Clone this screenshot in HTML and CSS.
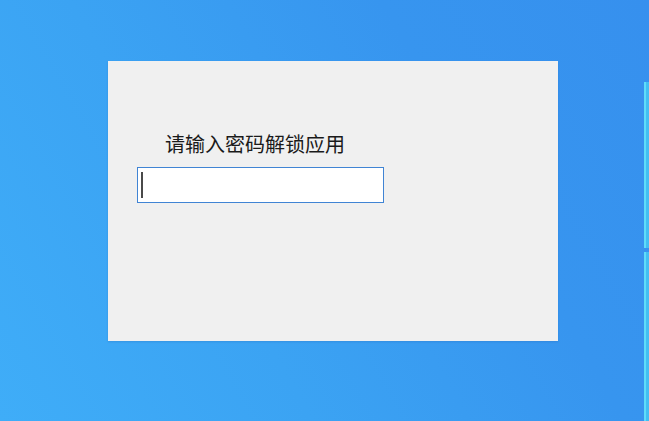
FILE: index.html
```html
<!DOCTYPE html>
<html lang="zh">
<head>
<meta charset="utf-8">
<title>解锁应用</title>
<link rel="stylesheet" href="styles.css">
</head>
<body>
<div class="desktop">
  <div class="edge edge-top"></div>
  <div class="edge edge-bottom"></div>
  <div class="dialog">
    <div class="label">请输入密码解锁应用</div>
    <div class="field"><span class="caret"></span></div>
  </div>
</div>
</body>
</html>
```

FILE: styles.css
```css
html, body {
  margin: 0;
  padding: 0;
}
body {
  width: 649px;
  height: 421px;
  overflow: hidden;
  font-family: "Noto Sans CJK SC", "Noto Sans", sans-serif;
}
.desktop {
  position: relative;
  width: 649px;
  height: 421px;
  background:
    linear-gradient(60deg, #3fadf8 0%, #3ba3f3 35%, #3795ef 70%, #3690ee 100%);
  padding: 61px 0 0 108px;
  box-sizing: border-box;
}
.edge {
  position: absolute;
  left: 644px;
  width: 5px;
  background: linear-gradient(90deg, #5fdcfa 0 2px, #42bff2 2px 100%);
}
.edge-top {
  top: 82px;
  height: 166px;
}
.edge-bottom {
  top: 252px;
  bottom: 0;
}
.dialog {
  width: 450px;
  height: 280px;
  background: #f0f0f0;
  box-sizing: border-box;
  padding: 68px 0 0 29px;
  box-shadow: 0 1px 2px rgba(30, 90, 170, 0.25);
}
.label {
  margin-left: 28px;
  font-size: 20px;
  line-height: 30px;
  color: #1a1a1a;
  letter-spacing: 0;
  height: 38px;
}
.field {
  width: 247px;
  height: 36px;
  box-sizing: border-box;
  background: #ffffff;
  border: 1px solid #4084d4;
  display: flex;
  align-items: center;
  padding-left: 3px;
}
.caret {
  width: 2px;
  height: 26px;
  background: #4a4a4a;
}
```
